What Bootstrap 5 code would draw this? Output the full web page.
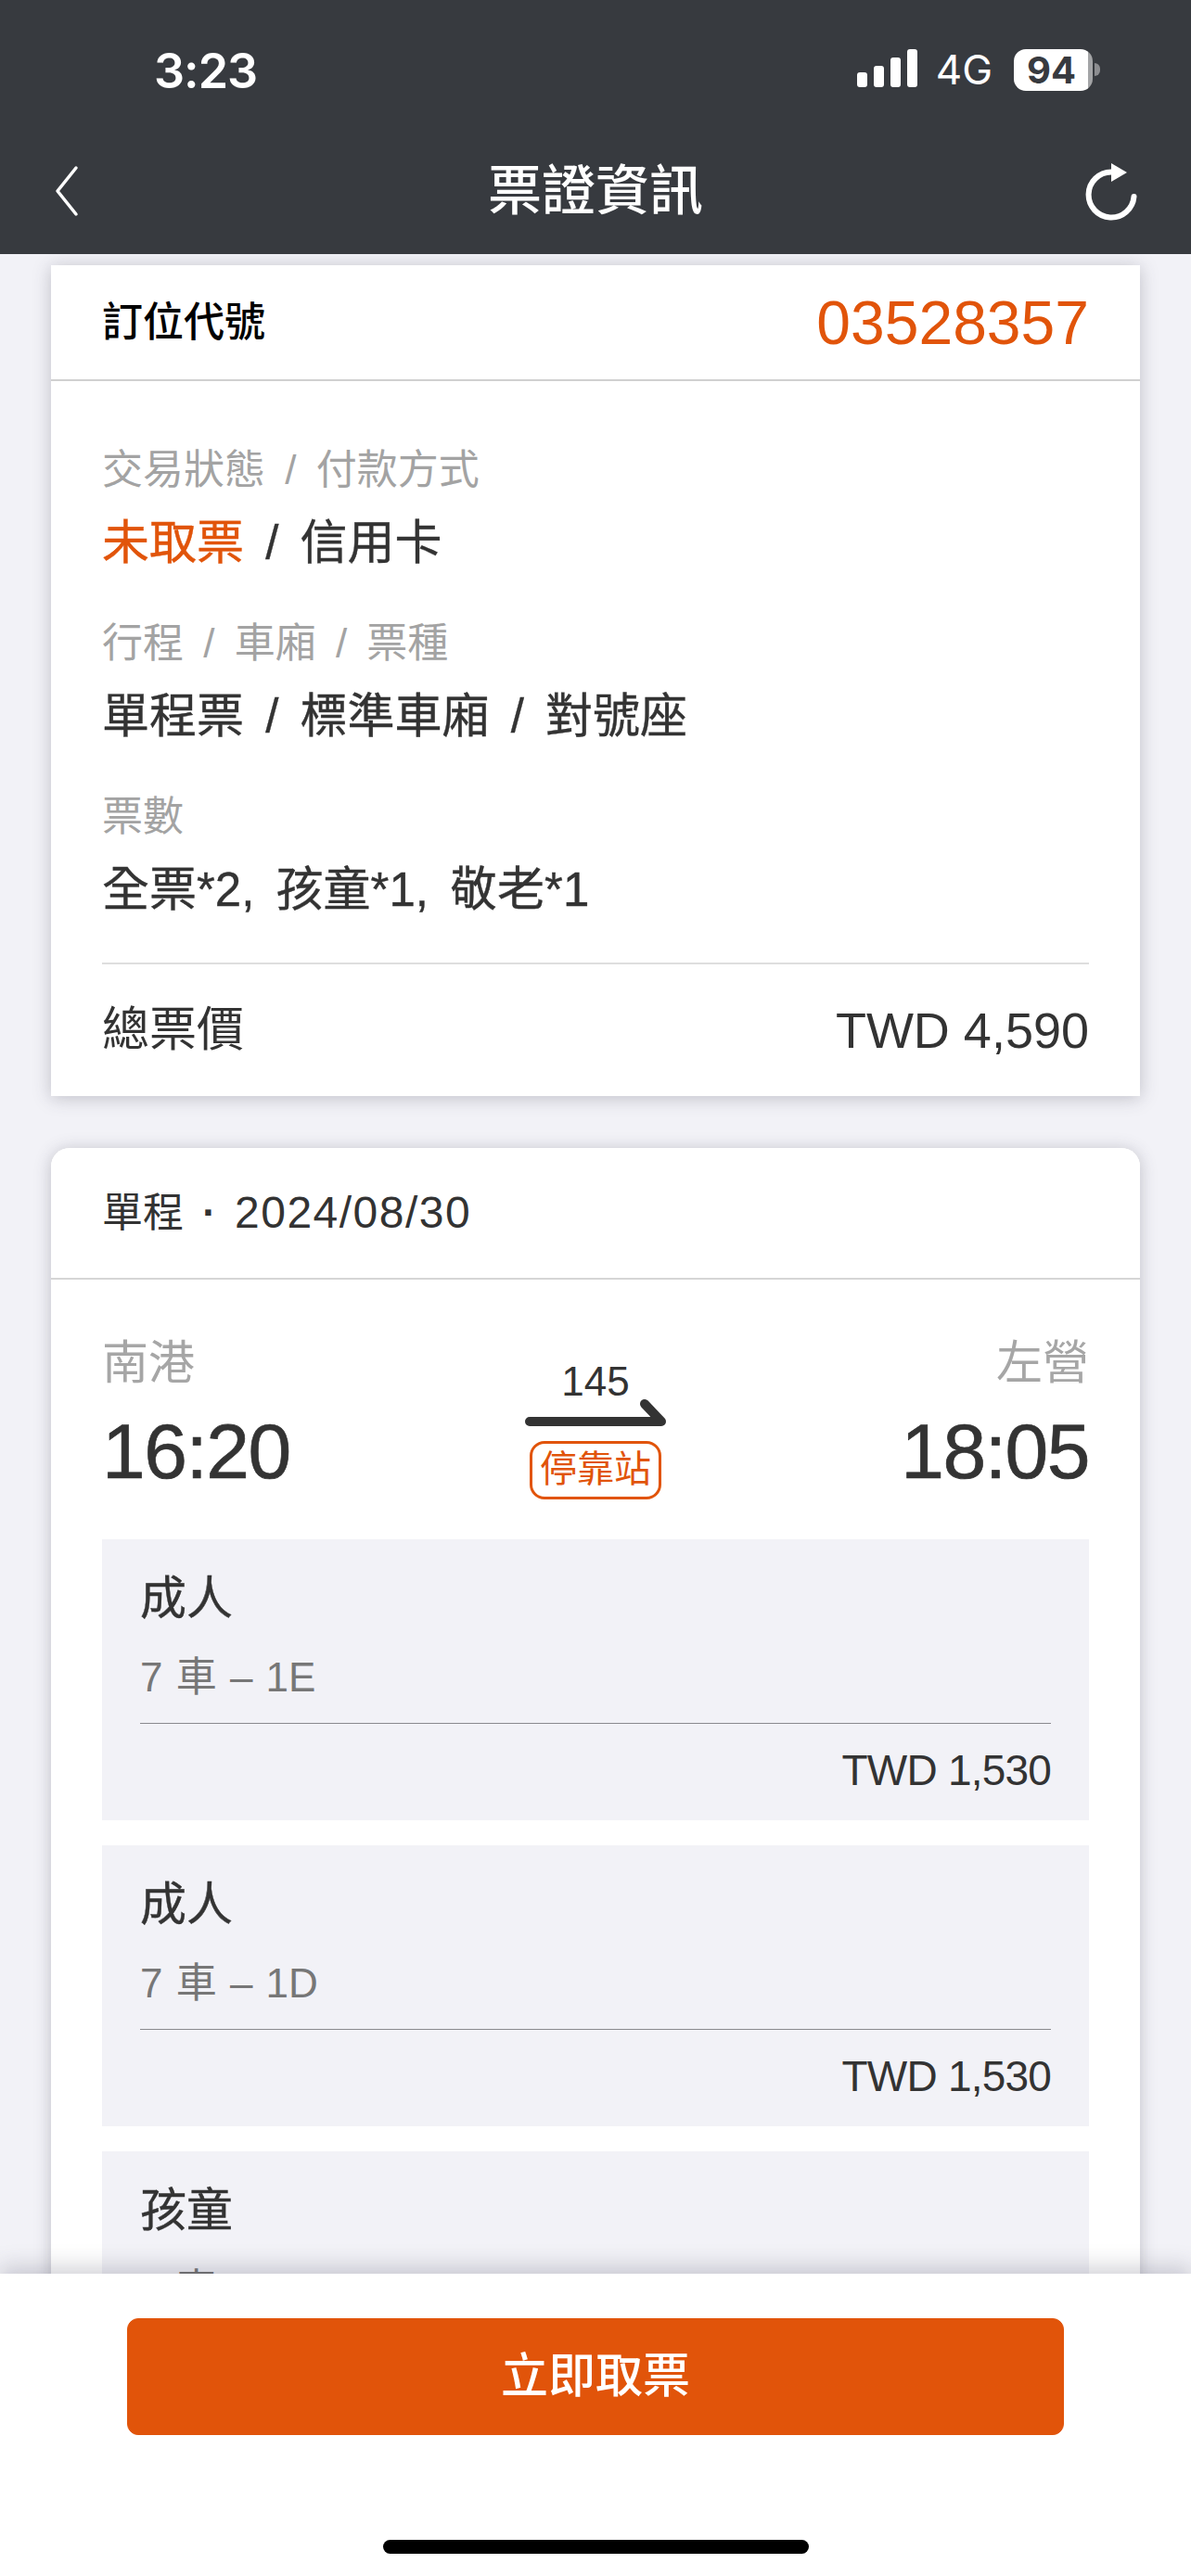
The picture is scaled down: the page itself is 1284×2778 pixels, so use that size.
<!DOCTYPE html>
<html lang="zh-Hant">
<head>
    <meta charset="UTF-8">
    <meta name="viewport" content="width=device-width, initial-scale=1.0">
    <title>票證資訊</title>
    <link rel="stylesheet" href="https://cdn.jsdelivr.net/npm/bootstrap@5.3.0/dist/css/bootstrap.min.css">
    <style>
        html, body { height: 100%; }
        body {
            background-color: #f2f2f7;
            color: #333;
            font-family: "Liberation Sans", "Noto Sans CJK TC", sans-serif;
            overflow: hidden;
        }
        .app-shell { height: 2778px; }
        .top-bar { background-color: #373a3f; height: 274px; color: #fff; flex: none; }
        .status-row { height: 150px; padding: 0 98px 0 166px; }
        .clock { font-family: Inter, sans-serif; font-weight: 600; font-size: 52px; line-height: 54px; margin-top: 50px; letter-spacing: -1px; }
        .status-icons { margin-top: 53px; }
        .net-type { font-family: Inter, sans-serif; font-size: 44px; line-height: 45px; margin: 0 23px 0 20px; }
        .battery { width: 85px; height: 45px; border-radius: 13px; background: linear-gradient(to right, #fff 80px, #a3a4a6 80px); color: #373a3f; font-family: Inter, sans-serif; font-weight: 700; font-size: 40px; line-height: 45px; text-align: center; padding-right: 4px; }
        .battery-nub { width: 6px; height: 14px; background: #8c8d90; border-radius: 0 7px 7px 0; margin: 15px 0 0 2px; }
        .nav-row { height: 112px; padding: 0 58px; }
        .nav-slot { width: 56px; }
        .page-title { font-size: 58px; font-weight: 500; line-height: 70px; margin: 0; }
        .scroll-area { flex: 1 1 0; overflow: hidden; padding: 12px 55px 0; }
        .ticket-card { border: 0; border-radius: 0; box-shadow: 0 2px 18px rgba(60, 60, 80, .28); margin-bottom: 56px; }
        .ticket-card.trip-card { border-radius: 20px 20px 0 0; }
        .code-head { height: 125px; padding: 0 55px; background: #fff; border-bottom: 2px solid #d0d0d0; border-radius: 0; }
        .code-label { font-size: 44px; font-weight: 500; color: #000; }
        .code-value { font-size: 66px; line-height: 70px; color: #e1540a; }
        .info-body { padding: 68px 55px 0; }
        .info-label { font-size: 44px; line-height: 56px; color: #a3a3a3; word-spacing: 9px; }
        .info-value { font-size: 51px; line-height: 62px; margin-top: 20px; margin-bottom: 49px; color: #333; word-spacing: 9px; -webkit-text-stroke: .4px currentColor; }
        .info-value .hot { color: #e1540a; }
        .total-row { border-top: 2px solid #dedede; height: 144px; font-size: 51px; color: #333; margin-top: -2px; }
        .total-amount { font-size: 54px; }
        .trip-head { height: 142px; padding: 0 55px; background: #fff; border-bottom: 2px solid #d6d6d6; font-size: 44px; }
        .card-header.trip-head { border-radius: 20px 20px 0 0; }
        .trip-head .sep { display: inline-block; width: 55px; text-align: center; font-weight: 700; }
        .trip-date { font-size: 48px; letter-spacing: 1.5px; }
        .trip-body { padding: 60px 55px 0; }
        .route-grid { display: grid; grid-template-columns: 1fr auto 1fr; }
        .station { font-size: 50px; line-height: 60px; color: #a6a6a6; }
        .dep-time { font-size: 84px; line-height: 96px; color: #333; margin-top: 17px; letter-spacing: -1.5px; -webkit-text-stroke: .7px #333; }
        .train-no { font-size: 44px; line-height: 39px; text-align: center; margin-top: 30px; }
        .stop-tag { display: block; width: 142px; height: 63px; margin: 15px auto 0; border: 3px solid #e1540a; border-radius: 16px; color: #e1540a; font-size: 40px; line-height: 55px; text-align: center; }
        .seat-list { margin-top: 43px; }
        .seat-box { background-color: #f2f2f7; padding: 34px 41px 0; height: 303px; margin-bottom: 27px; }
        .fare-type { font-size: 50px; line-height: 60px; color: #333; -webkit-text-stroke: .4px #333; }
        .seat-no { font-size: 44px; line-height: 54px; color: #777; margin-top: 28px; padding-bottom: 22px; border-bottom: 1px solid #8a8a8e; word-spacing: 2px; }
        .seat-price { font-size: 46px; line-height: 52px; text-align: right; margin-top: 24px; color: #333; letter-spacing: -.8px; }
        .bottom-bar { height: 326px; flex: none; background: #fff; position: relative; padding: 48px 137px 0; box-shadow: 0 -8px 22px rgba(60, 60, 80, .22); }
        .take-btn { background-color: #e1540a; border-color: #e1540a; color: #fff; height: 126px; width: 100%; font-size: 51px; font-weight: 500; border-radius: 12px; }
        .home-bar { width: 459px; height: 15px; background: #000; border-radius: 8px; margin: 113px auto 0; }
    </style>
</head>
<body>
    <div class="app-shell d-flex flex-column">

        <!-- Header -->
        <header class="top-bar">
            <div class="status-row d-flex justify-content-between align-items-start">
                <div class="clock">3:23</div>
                <div class="status-icons d-flex align-items-start">
                    <svg width="65" height="43" viewBox="0 0 65 43" fill="#fff">
                        <rect x="0" y="25" width="11" height="16" rx="3"/>
                        <rect x="18" y="18" width="11" height="23" rx="3"/>
                        <rect x="36" y="9" width="11" height="32" rx="3"/>
                        <rect x="54" y="0" width="11" height="41" rx="3"/>
                    </svg>
                    <span class="net-type">4G</span>
                    <div class="battery">94</div>
                    <div class="battery-nub"></div>
                </div>
            </div>
            <div class="nav-row d-flex justify-content-between align-items-center">
                <div class="nav-slot">
                    <svg class="d-block" width="30" height="56" viewBox="0 0 30 56" fill="none" stroke="#fff" stroke-width="3.5" stroke-linecap="round" stroke-linejoin="round">
                        <path d="M24 3 L4 28 L24 53"/>
                    </svg>
                </div>
                <h1 class="page-title">票證資訊</h1>
                <div class="nav-slot">
                    <svg class="d-block" width="56" height="64" viewBox="1169 174 56 64" fill="none">
                        <path d="M1221.5 212 A24.5 24.5 0 1 1 1197 185.5" stroke="#fff" stroke-width="6" stroke-linecap="round"/>
                        <path d="M1197 176 L1214 186 L1197 196 Z" fill="#fff"/>
                    </svg>
                </div>
            </div>
        </header>

        <!-- Content -->
        <main class="scroll-area">
            <div class="card ticket-card">
                <div class="card-header code-head d-flex justify-content-between align-items-center">
                    <span class="code-label">訂位代號</span>
                    <span class="code-value">03528357</span>
                </div>
                <div class="card-body info-body">
                    <div class="info-label">交易狀態 / 付款方式</div>
                    <div class="info-value"><span class="hot">未取票</span> / 信用卡</div>
                    <div class="info-label">行程 / 車廂 / 票種</div>
                    <div class="info-value">單程票 / 標準車廂 / 對號座</div>
                    <div class="info-label">票數</div>
                    <div class="info-value">全票*2, 孩童*1, 敬老*1</div>
                    <div class="total-row d-flex justify-content-between align-items-center">
                        <span>總票價</span>
                        <span class="total-amount">TWD 4,590</span>
                    </div>
                </div>
            </div>

            <div class="card ticket-card trip-card">
                <div class="card-header trip-head d-flex align-items-center">
                    單程<span class="sep">·</span><span class="trip-date">2024/08/30</span>
                </div>
                <div class="card-body trip-body">
                    <div class="route-grid">
                        <div>
                            <div class="station">南港</div>
                            <div class="dep-time">16:20</div>
                        </div>
                        <div>
                            <div class="train-no">145</div>
                            <svg class="d-block" width="156" height="30" viewBox="0 0 156 30" fill="none" stroke="#333" stroke-width="10" stroke-linecap="round" stroke-linejoin="round">
                                <path d="M7 24 H149 L131 5"/>
                            </svg>
                            <span class="stop-tag">停靠站</span>
                        </div>
                        <div class="text-end">
                            <div class="station">左營</div>
                            <div class="dep-time">18:05</div>
                        </div>
                    </div>
                    <div class="seat-list" id="seatList"></div>
                </div>
            </div>
        </main>

        <!-- Footer -->
        <footer class="bottom-bar">
            <button type="button" class="btn take-btn">立即取票</button>
            <div class="home-bar"></div>
        </footer>
    </div>

    <script>
        const seats = [
            { type: "成人", seat: "7 車 – 1E", price: "TWD 1,530" },
            { type: "成人", seat: "7 車 – 1D", price: "TWD 1,530" },
            { type: "孩童", seat: "7 車 – 1C", price: "TWD 765" }
        ];
        document.getElementById("seatList").innerHTML = seats.map(s => `
            <div class="seat-box">
                <div class="fare-type">${s.type}</div>
                <div class="seat-no">${s.seat}</div>
                <div class="seat-price">${s.price}</div>
            </div>
        `).join("");
    </script>
    <script src="https://cdn.jsdelivr.net/npm/bootstrap@5.3.0/dist/js/bootstrap.bundle.min.js"></script>
</body>
</html>
